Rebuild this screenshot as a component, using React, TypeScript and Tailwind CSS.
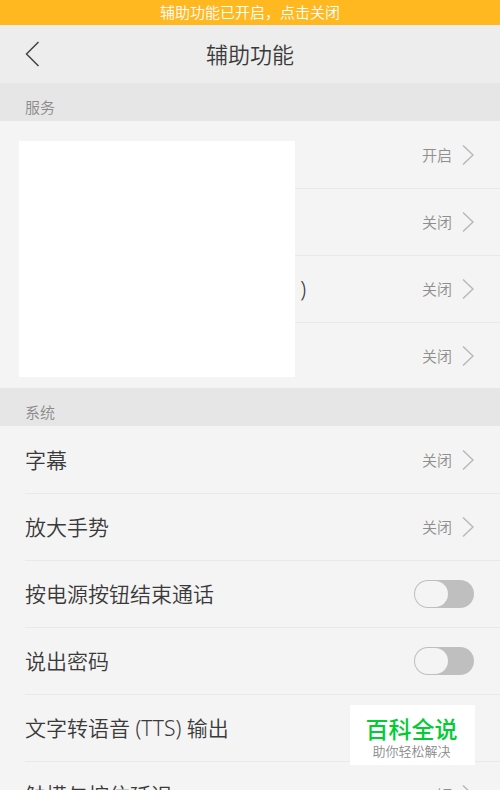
import type { ReactNode } from "react";

function Chevron() {
  return (
    <svg width="12" height="22" viewBox="0 0 12 22" fill="none" aria-hidden="true" className="shrink-0">
      <path d="M1 1.5L11 11L1 20.5" stroke="#b8b8b8" strokeWidth="1.5" />
    </svg>
  );
}

function Section({ title, children, overlay }: { title: string; children: ReactNode; overlay?: ReactNode }) {
  return (
    <section className="relative">
      <h2 className="flex h-[38px] items-end bg-[#e6e6e6] px-[25px] pb-1 text-[15px] leading-5 text-[#8a8a8a]">
        {title}
      </h2>
      <div className="pl-[25px]">{children}</div>
      {overlay}
    </section>
  );
}

const rowClass =
  "flex h-[67px] w-full items-center justify-between border-t border-[#e9e9e9] pr-[26px] text-left text-[21px] leading-8 text-[#3a3a3a] first:border-t-0 last:h-[66px]";

function LinkRow({ label, value }: { label?: ReactNode; value?: string }) {
  return (
    <button type="button" className={rowClass}>
      <span>{label}</span>
      <span className="flex items-center gap-[10px] text-[15px] leading-6 text-[#8e8e8e]">
        {value}
        {value && <Chevron />}
      </span>
    </button>
  );
}

function SwitchRow({ label }: { label: string }) {
  return (
    <label className={rowClass}>
      <span>{label}</span>
      <input type="checkbox" role="switch" className="peer sr-only" />
      <span className="flex h-7 w-[60px] rounded-full bg-[#bfbfbf] p-px peer-checked:justify-end peer-checked:bg-[#ffb820]">
        <span className="h-[26px] w-[33px] rounded-full bg-[#f4f4f4]" />
      </span>
    </label>
  );
}

export default function App() {
  return (
    <div
      lang="zh-CN"
      className="relative h-screen overflow-hidden bg-[#f4f4f4] font-['Noto_Sans','Noto_Sans_CJK_SC',sans-serif] font-[350]"
    >
      <button type="button" className="block h-[25px] w-full bg-[#ffb820] text-center text-[15px] leading-[25px] text-white">
        辅助功能已开启，点击关闭
      </button>
      <header className="grid h-[58px] grid-cols-[1fr_auto_1fr] items-center bg-[#ededed] px-[25px]">
        <button type="button" aria-label="返回" className="w-4">
          <svg width="16" height="28" viewBox="0 0 16 28" fill="none" aria-hidden="true">
            <path d="M13.5 2L1.5 14L13.5 26" stroke="#444444" strokeWidth="1.5" />
          </svg>
        </button>
        <h1 className="text-[22px] leading-8 text-[#3a3a3a]">辅助功能</h1>
      </header>
      <main>
        <Section
          title="服务"
          overlay={<div className="absolute top-[58px] left-[19px] h-[236px] w-[276px] bg-white" />}
        >
          <LinkRow value="开启" />
          <LinkRow value="关闭" />
          <LinkRow label={<span className="block w-[281px] text-right">)</span>} value="关闭" />
          <LinkRow value="关闭" />
        </Section>
        <Section title="系统">
          <LinkRow label="字幕" value="关闭" />
          <LinkRow label="放大手势" value="关闭" />
          <SwitchRow label="按电源按钮结束通话" />
          <SwitchRow label="说出密码" />
          <LinkRow label="文字转语音 (TTS) 输出" />
          <LinkRow label="触摸与按住延迟" value="短" />
        </Section>
      </main>
      <aside className="absolute right-[25px] bottom-[25px] flex h-[60px] w-[125px] flex-col items-center bg-white pt-[10px] pr-[2px]">
        <p className="text-[23px] leading-7 font-medium text-[#00cc33]">百科全说</p>
        <p className="text-[13px] leading-4 text-[#8a8a8a]">助你轻松解决</p>
      </aside>
    </div>
  );
}
